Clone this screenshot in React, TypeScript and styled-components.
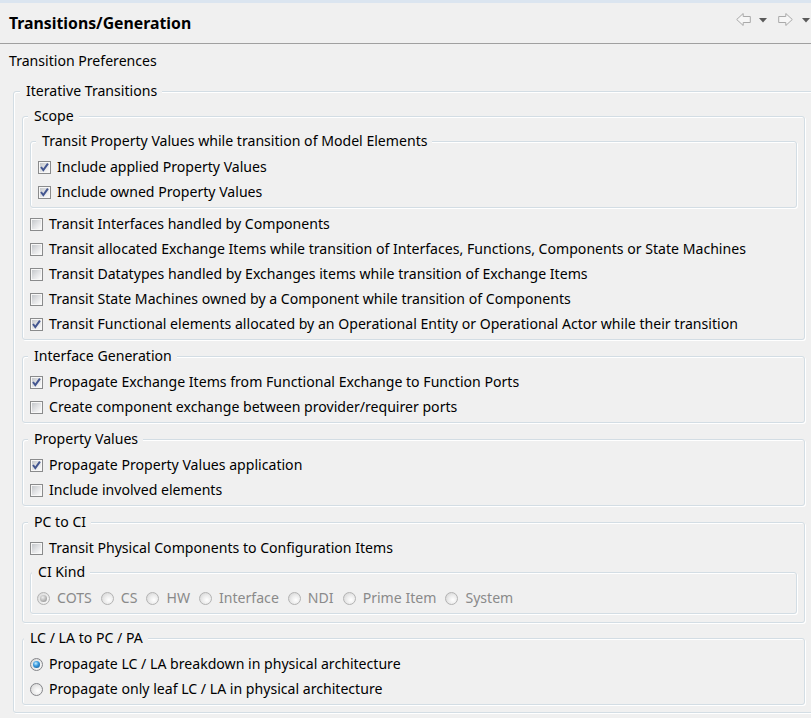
import React from "react";
import styled, { createGlobalStyle, css } from "styled-components";

const GlobalStyle = createGlobalStyle`
  html, body {
    margin: 0;
    padding: 0;
    background: #f0f0f0;
    overflow: hidden;
  }
  body {
    font-family: "Noto Sans", "Open Sans", sans-serif;
    font-size: 14.1px;
    color: #000;
  }
  * { box-sizing: border-box; }
`;

const Page = styled.div`
  width: 811px;
  height: 718px;
  overflow: hidden;
  background: #f0f0f0;
`;

const TopStrip = styled.div`
  height: 3px;
  background: #dbe5f0;
`;

const Header = styled.header`
  display: flex;
  height: 41px;
  padding-left: 9px;
  border-bottom: 1px solid #a0a0a0;
`;

const Title = styled.h1`
  margin: 0;
  padding-top: 1px;
  font-size: 15.8px;
  font-weight: 700;
  line-height: 39px;
  letter-spacing: 0;
`;

const NavTools = styled.nav`
  margin-left: auto;
  display: flex;
  align-items: flex-start;
  padding-top: 10px;
  padding-right: 1px;
`;

const NavArrow = styled.span<{ $gap: number }>`
  display: block;
  flex: none;
  width: 15px;
  height: 13px;
  margin-left: ${(p) => p.$gap}px;
  line-height: 0;
  cursor: default;
  svg {
    display: block;
  }
`;

const NavDrop = styled.span<{ $gap: number }>`
  display: block;
  flex: none;
  width: 8px;
  height: 5px;
  margin-top: 5px;
  margin-left: ${(p) => p.$gap}px;
  line-height: 0;
  cursor: default;
  svg {
    display: block;
  }
`;

const Body = styled.main`
  padding-top: 4px;
`;

const PrefLabel = styled.div`
  padding-left: 9px;
  height: 25px;
  line-height: 25px;
  margin-bottom: 6px;
`;

type GroupProps = {
  $padL?: number;
  $padR?: number;
  $padB?: number;
  $mt?: number;
  $mb?: number;
  $width?: number;
  $ml?: number;
};

const GroupBox = styled.fieldset<GroupProps>`
  display: block;
  min-width: 0;
  margin: ${(p) => p.$mt ?? 0}px 0 ${(p) => p.$mb ?? 0}px ${(p) => p.$ml ?? 0}px;
  padding: 0 ${(p) => p.$padR ?? 7}px ${(p) => p.$padB ?? 3}px ${(p) => p.$padL ?? 7}px;
  border: 1px solid #d3dde4;
  border-radius: 3px;
  box-shadow: 1px 1px 0 #ffffff, inset 1px 1px 0 #ffffff;
  ${(p) =>
    p.$width
      ? css`
          width: ${p.$width}px;
          flex: none;
        `
      : ""}
`;

const Legend = styled.legend<{ $shift: number }>`
  height: 25px;
  line-height: 24px;
  padding: 0 5px 0 6px;
  margin-left: ${(p) => p.$shift}px;
  background: #f0f0f0;
  white-space: nowrap;
`;

type GroupCompProps = GroupProps & {
  title: string;
  titleX?: number;
  children: React.ReactNode;
};

function Group({ title, titleX = 12, children, ...rest }: GroupCompProps) {
  const padL = rest.$padL ?? 7;
  const shift = titleX - 1 - padL - 6;
  return (
    <GroupBox {...rest}>
      <Legend $shift={shift}>{title}</Legend>
      {children}
    </GroupBox>
  );
}

const OptionRow = styled.label`
  display: flex;
  align-items: center;
  height: 25px;
  line-height: 24px;
  gap: 6px;
  white-space: nowrap;
`;

const InlineOptions = styled.div`
  display: flex;
  align-items: center;
  height: 25px;
  line-height: 24px;
`;

const InlineOption = styled.label<{ $disabled?: boolean }>`
  display: flex;
  align-items: center;
  gap: 7px;
  margin-right: 9px;
  white-space: nowrap;
  color: ${(p) => (p.$disabled ? "#8a8a8a" : "#000")};
`;

const CheckBox = styled.span`
  position: relative;
  flex: none;
  width: 13px;
  height: 13px;
  margin-top: 1px;
  border: 1px solid #8a8b8c;
  background: #f7f7f7;
  &::before {
    content: "";
    position: absolute;
    left: 1px;
    top: 1px;
    right: 1px;
    bottom: 1px;
    background: linear-gradient(135deg, #c4c7cb 0%, #e2e3e5 50%, #fbfbfb 100%);
  }
  svg {
    position: absolute;
    left: 0;
    top: 0;
  }
`;

const RadioDot = styled.span<{ $checked?: boolean; $disabled?: boolean }>`
  position: relative;
  flex: none;
  width: 13px;
  height: 13px;
  margin-top: 1px;
  border-radius: 50%;
  border: 1px solid ${(p) => (p.$disabled ? "#b3b3b3" : "#85868a")};
  background: radial-gradient(circle at 62% 62%, #ffffff 0%, #ececec 45%, #cfcfcf 100%);
  ${(p) =>
    p.$checked &&
    css`
      &::after {
        content: "";
        position: absolute;
        left: 2px;
        top: 2px;
        width: 7px;
        height: 7px;
        border-radius: 50%;
        background: ${p.$disabled
          ? "radial-gradient(circle at 40% 35%, #eeeeee 0%, #b4b4b4 55%, #858585 100%)"
          : "radial-gradient(circle at 40% 35%, #c8f0ff 0%, #3a9be0 40%, #0e4f86 100%)"};
      }
    `}
`;

function Check({ checked, label }: { checked?: boolean; label: string }) {
  return (
    <OptionRow>
      <CheckBox>
        {checked && (
          <svg width="11" height="11" viewBox="0 0 11 11">
            <path
              d="M2 5 L4.3 8 L8.9 1.6"
              fill="none"
              stroke="#435690"
              strokeWidth="2"
              strokeLinejoin="miter"
            />
          </svg>
        )}
      </CheckBox>
      {label}
    </OptionRow>
  );
}

function Radio({ checked, label }: { checked?: boolean; label: string }) {
  return (
    <OptionRow>
      <RadioDot $checked={checked} />
      {label}
    </OptionRow>
  );
}

function ArrowIcon({ dir }: { dir: "left" | "right" }) {
  const pts = "0.7,6.5 7.2,0.5 7.2,3.5 14.3,3.5 14.3,9.5 7.2,9.5 7.2,12.5";
  return (
    <svg width="15" height="13" viewBox="0 0 15 13">
      <polygon
        points={pts}
        fill="#f6f6f6"
        stroke="#a9a9a9"
        strokeWidth="1"
        strokeLinejoin="miter"
        transform={dir === "right" ? "translate(15 0) scale(-1 1)" : undefined}
      />
    </svg>
  );
}

function DropIcon() {
  return (
    <svg width="8" height="5" viewBox="0 0 8 5">
      <polygon points="0,0 8,0 4,4.5" fill="#5a5a5a" />
    </svg>
  );
}

const ciKinds = ["COTS", "CS", "HW", "Interface", "NDI", "Prime Item", "System"];

export default function App() {
  return (
    <Page>
      <GlobalStyle />
      <TopStrip />
      <Header>
        <Title>Transitions/Generation</Title>
        <NavTools>
          <NavArrow $gap={0} title="Back">
            <ArrowIcon dir="left" />
          </NavArrow>
          <NavDrop $gap={8} title="Back menu">
            <DropIcon />
          </NavDrop>
          <NavArrow $gap={11} title="Forward">
            <ArrowIcon dir="right" />
          </NavArrow>
          <NavDrop $gap={9} title="Forward menu">
            <DropIcon />
          </NavDrop>
        </NavTools>
      </Header>
      <Body>
        <PrefLabel>Transition Preferences</PrefLabel>
        <Group
          title="Iterative Transitions"
          titleX={13}
          $ml={13}
          $width={801}
          $padL={8}
          $padR={8}
          $padB={3}
        >
          <Group title="Scope">
            <Group title="Transit Property Values while transition of Model Elements" $mb={3}>
              <Check checked label="Include applied Property Values" />
              <Check checked label="Include owned Property Values" />
            </Group>
            <Check label="Transit Interfaces handled by Components" />
            <Check label="Transit allocated Exchange Items while transition of Interfaces, Functions, Components or State Machines" />
            <Check label="Transit Datatypes handled by Exchanges items while transition of Exchange Items" />
            <Check label="Transit State Machines owned by a Component while transition of Components" />
            <Check checked label="Transit Functional elements allocated by an Operational Entity or Operational Actor while their transition" />
          </Group>
          <Group title="Interface Generation" $mt={4}>
            <Check checked label="Propagate Exchange Items from Functional Exchange to Function Ports" />
            <Check label="Create component exchange between provider/requirer ports" />
          </Group>
          <Group title="Property Values" $mt={4}>
            <Check checked label="Propagate Property Values application" />
            <Check label="Include involved elements" />
          </Group>
          <Group title="PC to CI" $mt={4}>
            <Check label="Transit Physical Components to Configuration Items" />
            <Group title="CI Kind" titleX={8} $padL={6} $mb={5}>
              <InlineOptions>
                {ciKinds.map((k, i) => (
                  <InlineOption key={k} $disabled>
                    <RadioDot $checked={i === 0} $disabled />
                    {k}
                  </InlineOption>
                ))}
              </InlineOptions>
            </Group>
          </Group>
          <Group title="LC / LA to PC / PA" titleX={8} $mt={3} $mb={4}>
            <Radio checked label="Propagate LC / LA breakdown in physical architecture" />
            <Radio label="Propagate only leaf LC / LA in physical architecture" />
          </Group>
        </Group>
      </Body>
    </Page>
  );
}
